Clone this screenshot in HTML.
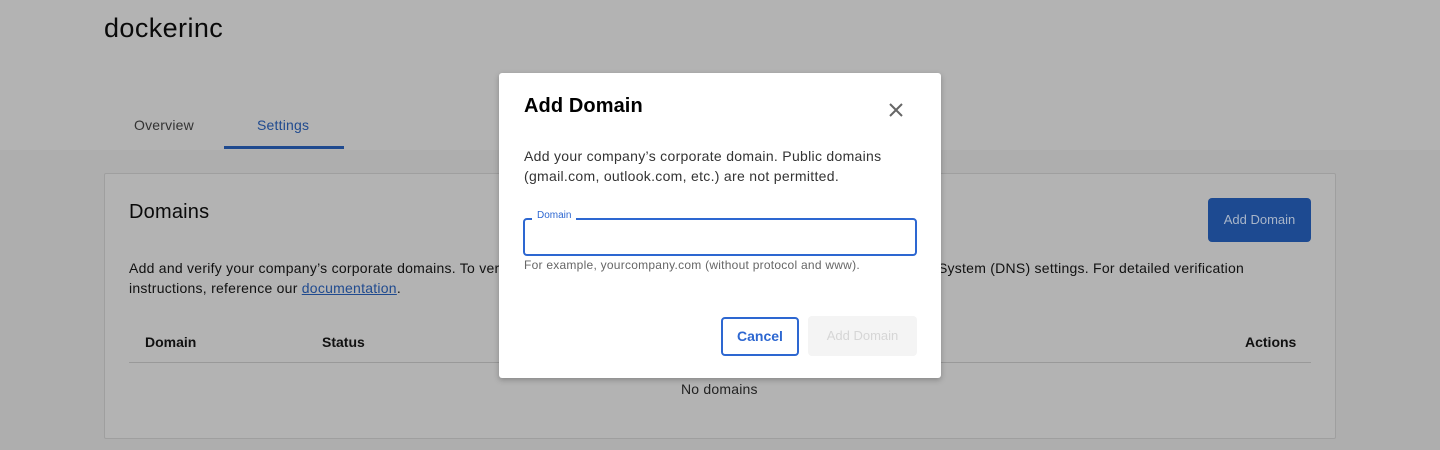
<!DOCTYPE html>
<html><head><meta charset="utf-8"><style>
*{margin:0;padding:0;box-sizing:border-box}
body{width:1440px;height:450px;overflow:hidden;background:#aeaeae;font-family:"Liberation Sans",Arial,sans-serif;position:relative;color:#111}
.a{position:absolute;white-space:nowrap}
</style></head><body>
<div class="a" style="left:0;top:0;width:1440px;height:150px;background:#b3b3b3"></div>
<div class="a" style="left:104px;top:13px;font-size:27px;letter-spacing:0.4px;color:#0a0a0a">dockerinc</div>
<div class="a" style="left:134px;top:117px;font-size:14px;letter-spacing:0.2px;color:#333">Overview</div>
<div class="a" style="left:257px;top:117px;font-size:14px;letter-spacing:0.2px;color:#1f4a8f">Settings</div>
<div class="a" style="left:224px;top:146px;width:120px;height:3px;background:#1f4a8f"></div>

<div class="a" style="left:104px;top:173px;width:1232px;height:266px;background:#b3b3b3;border:1px solid #9f9f9f;border-radius:2px"></div>
<div class="a" style="left:129px;top:201px;font-size:20px;letter-spacing:0.2px;color:#0a0a0a">Domains</div>
<div class="a" style="left:1208px;top:198px;width:103px;height:44px;background:#1d4a91;border-radius:4px;color:#a8b5c9;font-size:13px;line-height:44px;text-align:center">Add Domain</div>
<div class="a" style="left:129px;top:258px;font-size:14px;line-height:20px;letter-spacing:0.25px;color:#111">Add and verify your company’s corporate domains. To verify a domain, you’ll need to add a TXT record to your Domain Name System (DNS) settings. For detailed verification<br>instructions, reference our <span style="color:#1f4a8f;text-decoration:underline">documentation</span>.</div>
<div class="a" style="left:145px;top:334px;font-size:14px;font-weight:bold;color:#111">Domain</div>
<div class="a" style="left:322px;top:334px;font-size:14px;font-weight:bold;color:#111">Status</div>
<div class="a" style="left:1245px;top:334px;font-size:14px;font-weight:bold;color:#111">Actions</div>
<div class="a" style="left:129px;top:362px;width:1182px;height:1px;background:#999"></div>
<div class="a" style="left:681px;top:381px;font-size:14px;letter-spacing:0.2px;color:#222">No domains</div>

<div class="a" style="left:499px;top:73px;width:442px;height:305px;background:#fff;border-radius:3px;box-shadow:0 2px 6px rgba(0,0,0,.25)"></div>
<div class="a" style="left:524px;top:95px;font-size:20px;font-weight:bold;letter-spacing:0.1px;color:#000">Add Domain</div>
<svg class="a" style="left:886px;top:100px" width="20" height="20" viewBox="0 0 20 20"><path d="M4 4L16 16M16 4L4 16" stroke="#666" stroke-width="2"/></svg>
<div class="a" style="left:524px;top:146px;font-size:14px;line-height:20px;letter-spacing:0.3px;color:#333">Add your company’s corporate domain. Public domains<br>(gmail.com, outlook.com, etc.) are not permitted.</div>
<div class="a" style="left:523px;top:218px;width:394px;height:38px;border:2px solid #2d67d1;border-radius:4px"></div>
<div class="a" style="left:532px;top:210px;padding:0 5px;background:#fff;font-size:10px;color:#2d67d1">Domain</div>
<div class="a" style="left:524px;top:258px;font-size:12px;letter-spacing:0.25px;color:#666">For example, yourcompany.com (without protocol and www).</div>
<div class="a" style="left:721px;top:317px;width:78px;height:39px;border:2px solid #2d67d1;border-radius:4px;color:#2d67d1;font-size:14px;line-height:35px;text-align:center;font-weight:bold">Cancel</div>
<div class="a" style="left:808px;top:316px;width:109px;height:40px;background:#f4f4f4;border-radius:4px;color:#d6d6d6;font-size:13px;line-height:40px;text-align:center">Add Domain</div>
</body></html>
